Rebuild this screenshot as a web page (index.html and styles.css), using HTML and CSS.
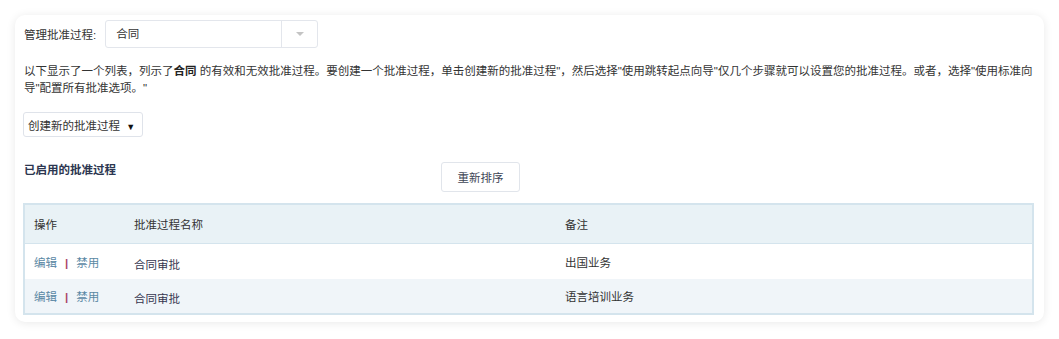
FILE: index.html
```html
<!DOCTYPE html>
<html lang="zh">
<head>
  <meta charset="UTF-8" />
  <title>管理批准过程</title>
  <link rel="stylesheet" href="styles.css">
</head>
<body>
  <div class="panel">
    <div class="picker-row">
      <span class="picker-label">管理批准过程:</span>
      <div class="picker">
        <span class="picker-value">合同</span>
        <span class="picker-arrow"><i></i></span>
      </div>
    </div>

    <p class="intro">以下显示了一个列表，列示了<b>合同</b> 的有效和无效批准过程。要创建一个批准过程，单击创建新的批准过程"，然后选择"使用跳转起点向导"仅几个步骤就可以设置您的批准过程。或者，选择"使用标准向导"配置所有批准选项。"</p>

    <div class="create-row">
      <button class="create-btn">创建新的批准过程 <span class="caret">▼</span></button>
    </div>

    <div class="section-head">
      <h3>已启用的批准过程</h3>
      <button class="btn">重新排序</button>
    </div>

    <table class="list">
      <thead>
        <tr>
          <th class="col-act">操作</th>
          <th class="col-name">批准过程名称</th>
          <th>备注</th>
        </tr>
      </thead>
      <tbody>
        <tr>
          <td class="actions"><a href="#">编辑</a><span class="sep">|</span><a href="#">禁用</a></td>
          <td class="name">合同审批</td>
          <td>出国业务</td>
        </tr>
        <tr class="alt">
          <td class="actions"><a href="#">编辑</a><span class="sep">|</span><a href="#">禁用</a></td>
          <td class="name">合同审批</td>
          <td>语言培训业务</td>
        </tr>
      </tbody>
    </table>
  </div>
</body>
</html>
```

FILE: styles.css
```css
body {
  margin: 0;
  padding: 15px;
  background: #fff;
  font-family: "Liberation Sans", "Noto Sans CJK SC", sans-serif;
  font-size: 11.5px;
  color: #333;
}

.panel {
  background: #fff;
  border-radius: 10px;
  box-shadow: 0 1px 10px rgba(0,0,0,0.09);
  padding: 5px 10px 7px 8px;
}

/* 顶部选择 */
.picker-row {
  display: flex;
  align-items: center;
  gap: 9px;
  padding-left: 1px;
}
.picker-label {
  color: #333;
}
.picker {
  display: flex;
  width: 211px;
  height: 26px;
  border: 1px solid #e3e6ec;
  border-radius: 3px;
}
.picker-value {
  flex: 1;
  padding-left: 10px;
  line-height: 26px;
  color: #333;
}
.picker-arrow {
  width: 35px;
  border-left: 1px solid #e3e6ec;
  display: flex;
  align-items: center;
  justify-content: center;
}
.picker-arrow i {
  width: 0; height: 0;
  border-left: 4px solid transparent;
  border-right: 4px solid transparent;
  border-top: 4px solid #c4c4c4;
}

.intro {
  margin: 15px 0 0 1px;
  line-height: 17px;
  color: #333;
}
.intro b {
  color: #222;
}

.create-row {
  margin-top: 15px;
}
.create-btn {
  font: inherit;
  color: #333;
  background: #fff;
  border: 1px solid #dfe3ea;
  border-radius: 3px;
  height: 25px;
  padding: 0 7px 0 4px;
  cursor: pointer;
}
.create-btn .caret {
  font-size: 9px;
  color: #111;
  margin-left: 3px;
}

.section-head {
  display: flex;
  align-items: flex-start;
  margin-top: 25px;
}
.section-head h3 {
  margin: 0;
  width: 417px;
  padding-left: 1px;
  font-size: 11.5px;
  line-height: 16px;
  color: #2c3650;
}
.btn {
  font: inherit;
  color: #3e4656;
  background: #fff;
  border: 1px solid #e1e5eb;
  border-radius: 3px;
  width: 79px;
  height: 30px;
  cursor: pointer;
}

.list {
  width: 100%;
  margin-top: 11px;
  border-collapse: collapse;
  border: 2px solid #d4e4ed;
}
.list th {
  background: #e9f2f6;
  height: 38px;
  text-align: left;
  font-weight: normal;
  color: #333;
  padding: 0 9px;
  border-bottom: 1px solid #d4e4ed;
}
.list td {
  height: 35px;
  padding: 0 9px;
  color: #333;
}
.list .col-act { width: 82px; }
.list .col-name { width: 413px; }
.list tr.alt td {
  background: #f0f5f9;
}
.list tr.alt td { height: 34px; }
.list td.name {
  padding-top: 4px;
  padding-bottom: 0;
  height: 31px;
  color: #363650;
}
.list tr.alt td.name { height: 30px; }
.actions a {
  color: #5a88a4;
  text-decoration: none;
}
.actions .sep {
  color: #a8446a;
  margin: 0 8px;
  font-weight: bold;
}
```
